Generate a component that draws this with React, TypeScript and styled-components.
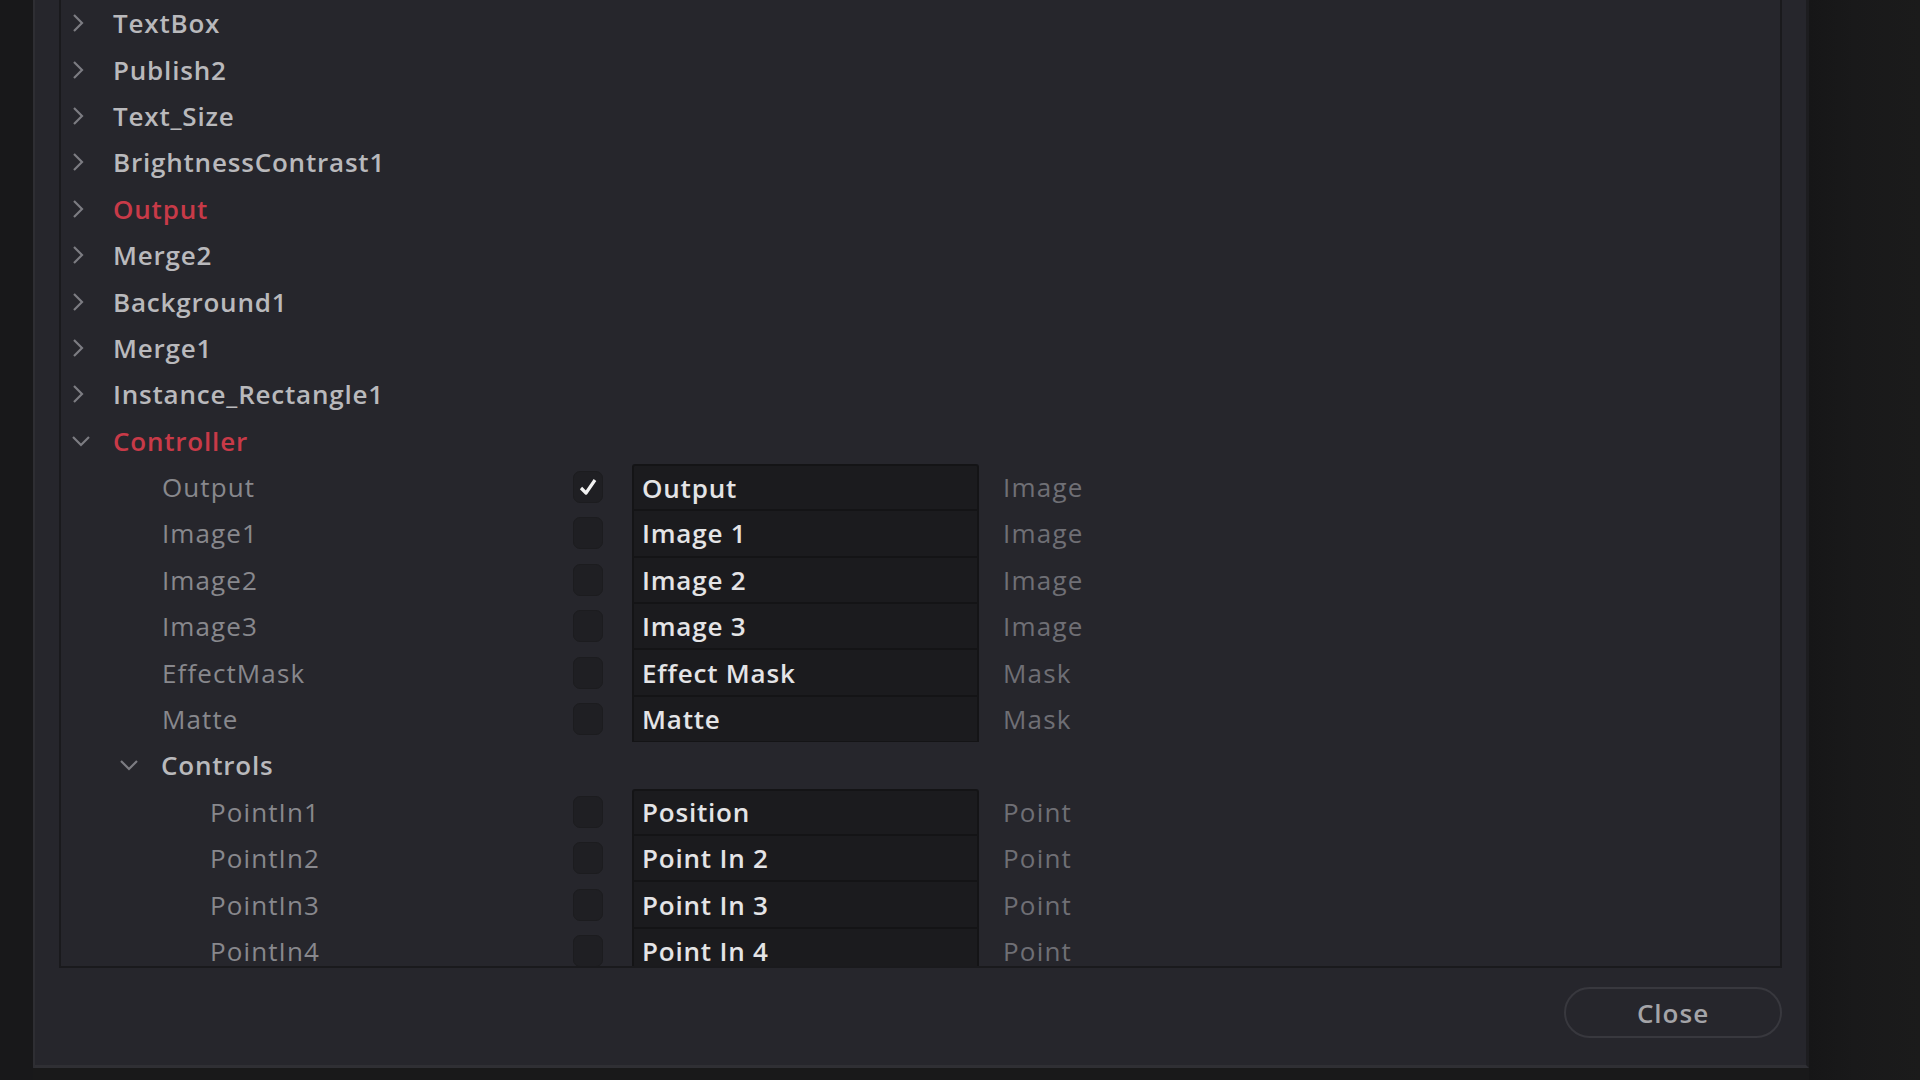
import styled, { createGlobalStyle } from 'styled-components';

type Item = {
  name: string;
  depth: number;
  expander?: 'open' | 'closed';
  accent?: boolean;
  sub?: boolean;
  input?: { label: string; type: string; checked?: boolean; first?: boolean };
};

const items: Item[] = [
  { name: 'TextBox', depth: 0, expander: 'closed' },
  { name: 'Publish2', depth: 0, expander: 'closed' },
  { name: 'Text_Size', depth: 0, expander: 'closed' },
  { name: 'BrightnessContrast1', depth: 0, expander: 'closed' },
  { name: 'Output', depth: 0, expander: 'closed', accent: true },
  { name: 'Merge2', depth: 0, expander: 'closed' },
  { name: 'Background1', depth: 0, expander: 'closed' },
  { name: 'Merge1', depth: 0, expander: 'closed' },
  { name: 'Instance_Rectangle1', depth: 0, expander: 'closed' },
  { name: 'Controller', depth: 0, expander: 'open', accent: true },
  { name: 'Output', depth: 1, sub: true, input: { label: 'Output', type: 'Image', checked: true, first: true } },
  { name: 'Image1', depth: 1, sub: true, input: { label: 'Image 1', type: 'Image' } },
  { name: 'Image2', depth: 1, sub: true, input: { label: 'Image 2', type: 'Image' } },
  { name: 'Image3', depth: 1, sub: true, input: { label: 'Image 3', type: 'Image' } },
  { name: 'EffectMask', depth: 1, sub: true, input: { label: 'Effect Mask', type: 'Mask' } },
  { name: 'Matte', depth: 1, sub: true, input: { label: 'Matte', type: 'Mask' } },
  { name: 'Controls', depth: 1, expander: 'open' },
  { name: 'PointIn1', depth: 2, sub: true, input: { label: 'Position', type: 'Point', first: true } },
  { name: 'PointIn2', depth: 2, sub: true, input: { label: 'Point In 2', type: 'Point' } },
  { name: 'PointIn3', depth: 2, sub: true, input: { label: 'Point In 3', type: 'Point' } },
  { name: 'PointIn4', depth: 2, sub: true, input: { label: 'Point In 4', type: 'Point' } },
];

const Chevron = ({ open }: { open: boolean }) =>
  open ? (
    <svg width="20" height="14" viewBox="0 0 20 14">
      <polyline points="2,3 10,11 18,3" fill="none" stroke="#7c7c82" strokeWidth="2.2" />
    </svg>
  ) : (
    <svg width="14" height="20" viewBox="0 0 14 20">
      <polyline points="3,2 11,10 3,18" fill="none" stroke="#7c7c82" strokeWidth="2.2" />
    </svg>
  );

const Check = () => (
  <svg width="22" height="22" viewBox="0 0 22 22">
    <polyline points="4,12 9,17 18,4" fill="none" stroke="#f2f2f2" strokeWidth="3.2" strokeLinejoin="round" />
  </svg>
);

const App = (): JSX.Element => {
  return (
    <>
      <GlobalStyle />
      <Screen>
        <Gutter />
        <Dialog>
          <TreePanel>
            {items.map((item, i) => (
              <Row key={i}>
                <NameCell $depth={item.depth} $sub={item.sub}>
                  <Expander>{item.expander && <Chevron open={item.expander === 'open'} />}</Expander>
                  <Name $accent={item.accent} $sub={item.sub}>
                    {item.name}
                  </Name>
                </NameCell>
                {item.input && (
                  <>
                    <CheckBox>{item.input.checked && <Check />}</CheckBox>
                    <Field $first={item.input.first}>{item.input.label}</Field>
                    <TypeLabel>{item.input.type}</TypeLabel>
                  </>
                )}
              </Row>
            ))}
          </TreePanel>
          <Footer>
            <CloseButton>Close</CloseButton>
          </Footer>
        </Dialog>
        <Backdrop />
      </Screen>
    </>
  );
};

const GlobalStyle = createGlobalStyle`
  html, body {
    margin: 0;
    background: #19191a;
    font-family: "Open Sans", "Noto Sans", sans-serif;
  }
`;

const Screen = styled.div`
  display: flex;
  width: 1920px;
  height: 1080px;
  overflow: hidden;
  background: #19191a;
`;

const Gutter = styled.div`
  width: 33px;
  flex-shrink: 0;
  background: #18181a;
`;

const Dialog = styled.div`
  width: 1776px;
  height: 1068px;
  flex-shrink: 0;
  display: flex;
  flex-direction: column;
  box-sizing: border-box;
  background: #26262c;
  border-left: 2px solid #2e2e33;
  border-right: 3px solid #1d1d20;
  border-bottom: 3px solid #2f2f34;
  padding: 0 24px 0 24px;
`;

const Backdrop = styled.div`
  flex: 1;
  background: linear-gradient(90deg, #161617 0%, #19191a 40%, #1b1b1b 100%);
`;

const TreePanel = styled.div`
  height: 968px;
  box-sizing: border-box;
  border: 2px solid #1a1a1d;
  border-top: none;
  overflow: hidden;
  display: flex;
  flex-direction: column;
`;

const Row = styled.div`
  height: 46.4px;
  flex-shrink: 0;
  display: flex;
  align-items: center;
`;

const NameCell = styled.div<{ $depth: number; $sub?: boolean }>`
  width: 512px;
  flex-shrink: 0;
  box-sizing: border-box;
  padding-left: ${(p) => 10 + p.$depth * 48 + (p.$sub ? 1 : 0)}px;
  display: flex;
  align-items: center;
`;

const Expander = styled.div`
  width: 42px;
  flex-shrink: 0;
  display: flex;
  align-items: center;
  svg {
    display: block;
  }
`;

const Name = styled.span<{ $accent?: boolean; $sub?: boolean }>`
  font-size: 26px;
  font-weight: ${(p) => (p.$sub ? 400 : 600)};
  color: ${(p) => (p.$accent ? '#c83a48' : p.$sub ? '#88888d' : '#b9b9bc')};
  white-space: nowrap;
  letter-spacing: ${(p) => (p.$sub ? 1.1 : 0.8)}px;
`;

const CheckBox = styled.div`
  width: 30px;
  height: 32px;
  flex-shrink: 0;
  box-sizing: border-box;
  border-radius: 7px;
  background: #1f1f23;
  border: 1px solid #1c1c1f;
  display: flex;
  align-items: center;
  justify-content: center;
`;

const Field = styled.div<{ $first?: boolean }>`
  margin-left: 29px;
  width: 347px;
  height: 100%;
  box-sizing: border-box;
  flex-shrink: 0;
  background: #1b1b1e;
  border: 2px solid #141416;
  border-top-width: ${(p) => (p.$first ? 2 : 1)}px;
  border-bottom-width: 1px;
  border-radius: ${(p) => (p.$first ? '3px 3px 0 0' : '0')};
  display: flex;
  align-items: center;
  padding-left: 8px;
  font-size: 26px;
  font-weight: 600;
  letter-spacing: 0.8px;
  color: #e4e4e6;
  white-space: nowrap;
`;

const TypeLabel = styled.span`
  margin-left: 24px;
  font-size: 26px;
  letter-spacing: 1.2px;
  color: #6f6f75;
  white-space: nowrap;
`;

const Footer = styled.div`
  flex: 1;
  display: flex;
  justify-content: flex-end;
  align-items: flex-start;
  padding-top: 19px;
`;

const CloseButton = styled.button`
  width: 218px;
  height: 51px;
  border-radius: 26px;
  border: 2px solid #38383e;
  background: #26262c;
  color: #a4a4a8;
  font-family: "Open Sans", "Noto Sans", sans-serif;
  font-size: 26px;
  font-weight: 600;
  letter-spacing: 1px;
  cursor: pointer;
`;

export default App;
